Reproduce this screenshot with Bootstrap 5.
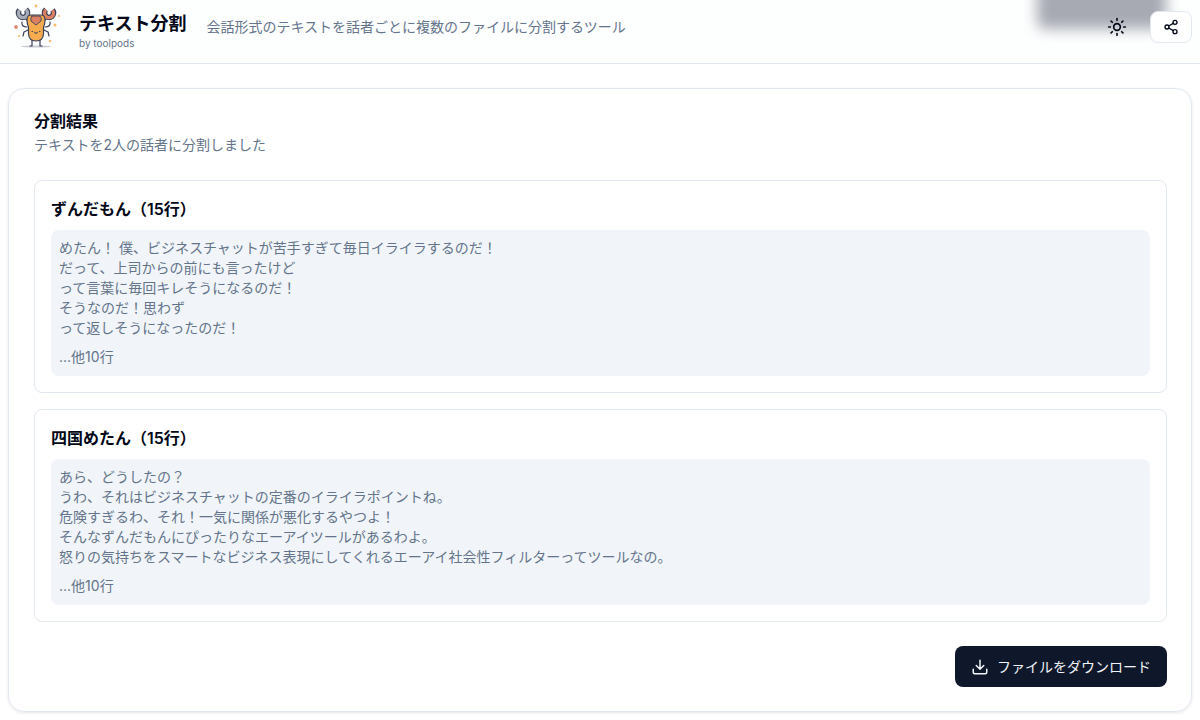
<!DOCTYPE html>
<html lang="ja">
<head>
<meta charset="utf-8">
<meta name="viewport" content="width=device-width, initial-scale=1">
<title>テキスト分割</title>
<link href="https://cdn.jsdelivr.net/npm/bootstrap@5.3.0/dist/css/bootstrap.min.css" rel="stylesheet">
<style>
  :root { --ink: #020817; --muted-ink: #64748b; --line: #e2e8f0; --soft: #f1f5f9; }
  body { font-family: Inter, "Noto Sans CJK JP", sans-serif; font-size: 14px; line-height: 20px; color: var(--ink); background: #fff; }
  .site-header { height: 64px; border-bottom: 1px solid var(--line); background: #fdfefe; padding: 0 8px 9px 12px; }
  .header-glow { top: -36px; right: 34px; width: 129px; height: 65px; background: #a7aab3; filter: blur(7px); border-radius: 8px; }
  .brand { color: var(--ink); gap: 19px; }
  .brand-text { padding-top: 7px; }
  .brand-name { font-size: 18px; line-height: 24px; font-weight: 600; }
  .brand-by { font-size: 10px; line-height: 14px; }
  .soft-ink { color: var(--muted-ink); }
  .icon-btn { width: 42px; height: 32px; color: var(--ink); border-radius: 8px; }
  .share-btn, .share-btn:hover { background: #fff; border: 1px solid var(--line); }
  .page-main { padding: 24px 8px 8px; }
  .result-card { border: 1px solid var(--line); border-radius: 16px; padding: 20px 24px 24px 25px; box-shadow: 0 1px 3px rgba(15, 23, 42, .1); }
  .heading { font-size: 16px; line-height: 24px; font-weight: 600; }
  .summary { margin: 2px 0 25px; }
  .speaker { border: 1px solid var(--line); border-radius: 8px; padding: 16px; }
  .speaker .heading { margin-bottom: 9px; }
  .excerpt { background: var(--soft); border-radius: 8px; padding: 8px 8px 9px; }
  .more-lines { margin-top: 9px; }
  .download-btn, .download-btn:hover { background: #0f172a; color: #f1f5f9; font-size: 14px; line-height: 21px; border-radius: 8px; padding: 9px 15px; }
</style>
</head>
<body>
<header class="site-header position-relative overflow-hidden d-flex align-items-center">
  <div class="header-glow position-absolute"></div>
  <a href="#" class="brand d-flex align-items-center text-decoration-none">
    <svg width="48" height="48" viewBox="0 0 48 48" fill="none" stroke="#3b4058" stroke-width="1.200" stroke-linecap="round" stroke-linejoin="round" aria-hidden="true">
      <ellipse cx="24" cy="43.500" rx="15" ry="1" fill="#c9ccd4" stroke="none"/>
      <path d="M15 24 Q9 24 10 19 M33 24 Q39 24 38 19 M16 27 L12 29 L11 33 M32 27 L36 29 L37 33 M20 37 V43 H18 M28 37 V43 H30"/>
      <!-- spanners: dark outline first, then the coloured core -->
      <path d="M7.500 7 A4.500 4.500 0 1 0 14 6.500 M14 13 L17 16" stroke-width="5.600" stroke-linecap="butt"/>
      <path d="M7.500 7.300 A4.500 4.500 0 1 0 14 6.800 M13 12 L18 17" stroke="#a6abb6" stroke-width="3.400" stroke-linecap="butt"/>
      <path d="M40.500 7 A4.500 4.500 0 1 1 34 6.500 M34 13 L31 16" stroke-width="5.600" stroke-linecap="butt"/>
      <path d="M40.500 7.300 A4.500 4.500 0 1 1 34 6.800 M35 12 L30 17" stroke="#dc8063" stroke-width="3.400" stroke-linecap="butt"/>
      <path d="M19 12 H29 Q33 12 33 17 Q33 21 31.500 24 V31 Q31 38 24 38 Q17 38 16.500 31 V24 Q15 21 15 17 Q15 12 19 12Z" fill="#f5ac4f"/>
      <path d="M20 13 H28 Q30 15 29 18 L24 22 L19 18 Q18 15 20 13Z" fill="#dc8063" stroke-width="0.900"/>
      <path d="M20 28.500 H20.500 M27.500 28.500 H28 M22.800 29.500 Q24 31 25.200 29.500"/>
      <g stroke="none" fill="#f6bd70"><circle cx="24" cy="3" r="1.400"/><circle cx="43" cy="22" r="1.500"/><circle cx="7" cy="33" r="1.100"/><circle cx="38" cy="38" r="1.300"/><circle cx="47" cy="13" r="1"/></g>
      <circle cx="4" cy="24" r="1.900" fill="#e08a72" stroke="none"/>
    </svg>
    <span class="brand-text d-flex flex-column">
      <span class="brand-name">テキスト分割</span>
      <span class="brand-by soft-ink">by toolpods</span>
    </span>
  </a>
  <p class="soft-ink mb-0 ms-3 ps-1 flex-grow-1">会話形式のテキストを話者ごとに複数のファイルに分割するツール</p>
  <div class="position-relative d-flex align-items-center gap-2">
    <button type="button" class="btn icon-btn p-0 d-flex align-items-center justify-content-center ms-2 me-1" aria-label="テーマ切り替え">
      <svg width="20" height="20" viewBox="0 0 24 24" fill="none" stroke="currentColor" stroke-width="2" stroke-linecap="round" aria-hidden="true"><circle cx="12" cy="12" r="4"/><path d="M12 2v2M12 20v2M4.930 4.930l1.410 1.410M17.660 17.660l1.410 1.410M2 12h2M20 12h2M6.340 17.660l-1.410 1.410M19.070 4.930l-1.410 1.410"/></svg>
    </button>
    <button type="button" class="btn icon-btn share-btn p-0 d-flex align-items-center justify-content-center" aria-label="共有">
      <svg width="16" height="16" viewBox="0 0 24 24" fill="none" stroke="currentColor" stroke-width="2" stroke-linecap="round" aria-hidden="true"><circle cx="18" cy="5" r="3"/><circle cx="6" cy="12" r="3"/><circle cx="18" cy="19" r="3"/><path d="M8.590 13.510l6.830 3.980M15.410 6.510l-6.820 3.980"/></svg>
    </button>
  </div>
</header>
<main class="page-main">
  <section class="result-card">
    <h1 class="heading mb-0">分割結果</h1>
    <p class="soft-ink summary">テキストを2人の話者に分割しました</p>
    <div class="d-flex flex-column gap-3 mb-4">
      <article class="speaker">
        <h2 class="heading">ずんだもん（15行）</h2>
        <div class="excerpt soft-ink">
          <div>めたん！ 僕、ビジネスチャットが苦手すぎて毎日イライラするのだ！</div>
          <div>だって、上司からの前にも言ったけど</div>
          <div>って言葉に毎回キレそうになるのだ！</div>
          <div>そうなのだ！思わず</div>
          <div>って返しそうになったのだ！</div>
          <div class="more-lines">...他10行</div>
        </div>
      </article>
      <article class="speaker">
        <h2 class="heading">四国めたん（15行）</h2>
        <div class="excerpt soft-ink">
          <div>あら、どうしたの？</div>
          <div>うわ、それはビジネスチャットの定番のイライラポイントね。</div>
          <div>危険すぎるわ、それ！一気に関係が悪化するやつよ！</div>
          <div>そんなずんだもんにぴったりなエーアイツールがあるわよ。</div>
          <div>怒りの気持ちをスマートなビジネス表現にしてくれるエーアイ社会性フィルターってツールなの。</div>
          <div class="more-lines">...他10行</div>
        </div>
      </article>
    </div>
    <div class="d-flex justify-content-end">
      <button type="button" class="btn download-btn d-flex align-items-center gap-2">
        <svg width="18" height="18" viewBox="0 0 24 24" fill="none" stroke="currentColor" stroke-width="2" stroke-linecap="round" stroke-linejoin="round" aria-hidden="true"><path d="M21 15v4a2 2 0 0 1-2 2H5a2 2 0 0 1-2-2v-4M7 10l5 5 5-5M12 15V3"/></svg>
        ファイルをダウンロード
      </button>
    </div>
  </section>
</main>
<script src="https://cdn.jsdelivr.net/npm/bootstrap@5.3.0/dist/js/bootstrap.bundle.min.js"></script>
</body>
</html>
